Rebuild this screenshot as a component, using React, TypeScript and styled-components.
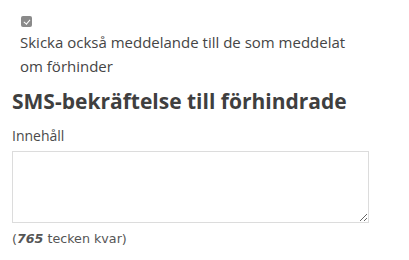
import React from 'react';
import styled, { createGlobalStyle } from 'styled-components';

const GlobalStyle = createGlobalStyle`
  body {
    margin: 0;
    background: #ffffff;
    font-family: "Open Sans", "Liberation Sans", sans-serif;
    color: #454545;
  }
`;

const Page = styled.div`
  padding: 0 12px;
`;

const CheckboxBlock = styled.div`
  padding: 16px 0 0 8px;
  width: 330px;
`;

const Checkbox = styled.input`
  appearance: none;
  -webkit-appearance: none;
  position: relative;
  display: block;
  box-sizing: border-box;
  margin: 0 0 3px 1px;
  width: 11px;
  height: 11px;
  border: none;
  border-radius: 2px;
  background-color: #8a8a8a;
  opacity: 1;

  &:disabled {
    background-color: #8a8a8a;
    opacity: 1;
  }

  &:checked::after {
    content: '';
    position: absolute;
    left: 4px;
    top: 1.5px;
    width: 2.5px;
    height: 5px;
    border: solid #ffffff;
    border-width: 0 1.6px 1.6px 0;
    transform: rotate(40deg);
  }
`;

const CheckboxLabel = styled.label`
  display: block;
  font-size: 15px;
  line-height: 24px;
  color: #454545;
`;

const Heading = styled.h2`
  margin: 8px 0 0;
  font-size: 21px;
  line-height: 30px;
  font-weight: 700;
  color: #3f3f3f;
`;

const FieldLabel = styled.label`
  display: block;
  margin-top: 10px;
  font-size: 14px;
  line-height: 20px;
  color: #4a4a4a;
`;

const TextArea = styled.textarea`
  display: block;
  box-sizing: border-box;
  margin-top: 5px;
  width: 357px;
  height: 72px;
  border: 1px solid #dcdcdc;
  border-radius: 0;
  padding: 4px;
  font-family: inherit;
  font-size: 14px;
`;

const Counter = styled.div`
  margin-top: 7px;
  font-family: "DejaVu Sans", Verdana, sans-serif;
  font-size: 12.7px;
  line-height: 18px;
  color: #555555;
`;

const Remaining = styled.em`
  font-weight: 700;
`;

export default function App() {
  return (
    <>
      <GlobalStyle />
      <Page>
        <CheckboxBlock>
          <Checkbox type="checkbox" checked disabled readOnly />
          <CheckboxLabel>
            Skicka också meddelande till de som meddelat om förhinder
          </CheckboxLabel>
        </CheckboxBlock>
        <Heading>SMS-bekräftelse till förhindrade</Heading>
        <FieldLabel>Innehåll</FieldLabel>
        <TextArea />
        <Counter>
          (<Remaining>765</Remaining> tecken kvar)
        </Counter>
      </Page>
    </>
  );
}
